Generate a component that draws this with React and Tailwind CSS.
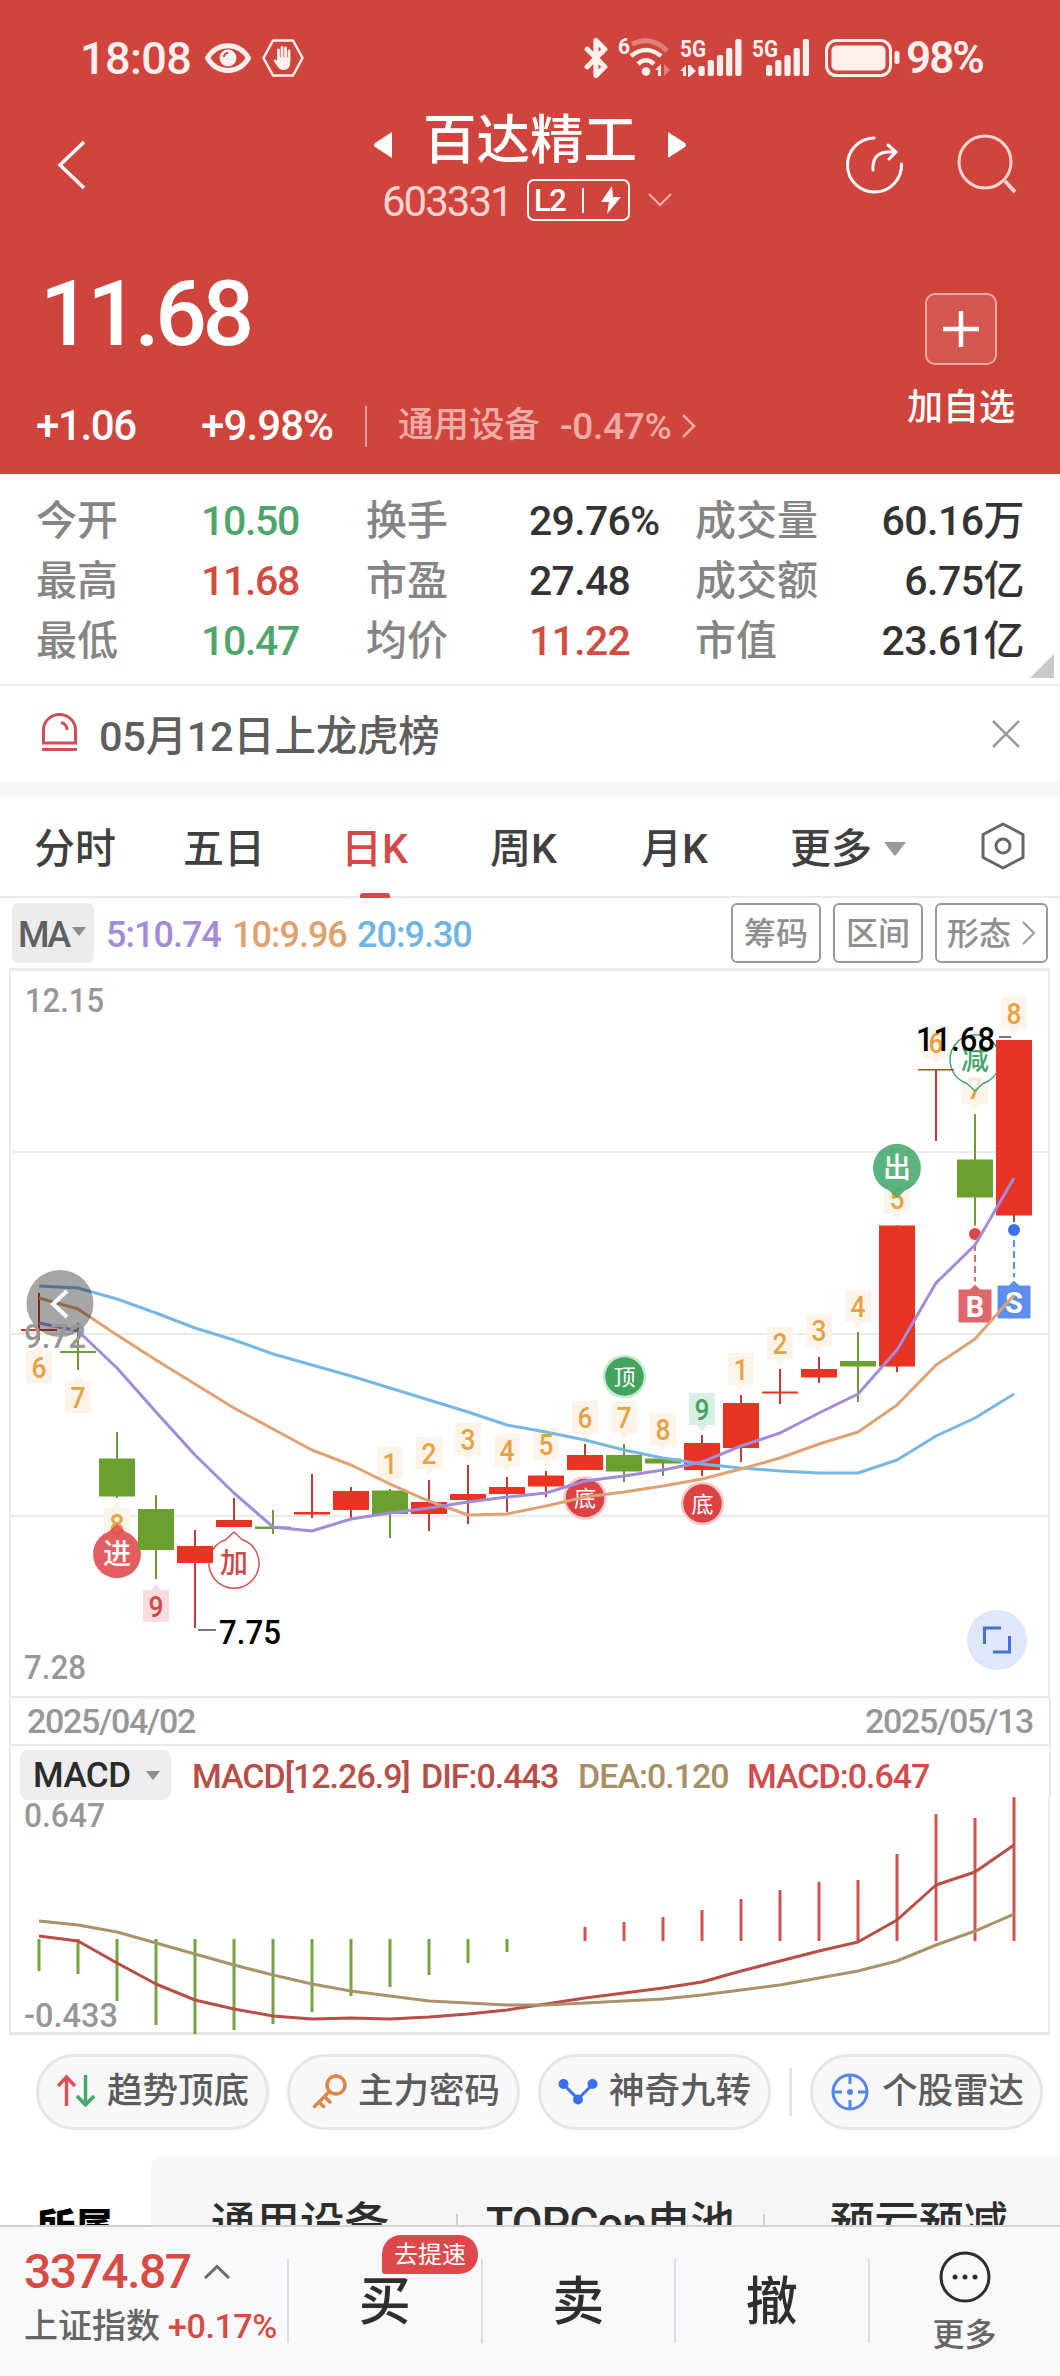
import { Bluetooth } from "lucide-react";

const FONT = "font-['Roboto','Noto_Sans_CJK_SC',sans-serif]";

const STATS = [
  ["今开", "10.50", "text-[#4fa56b]", "换手", "29.76%", "text-[#333]", "成交量", "60.16万"],
  ["最高", "11.68", "text-[#d14c44]", "市盈", "27.48", "text-[#333]", "成交额", "6.75亿"],
  ["最低", "10.47", "text-[#4fa56b]", "均价", "11.22", "text-[#d14c44]", "市值", "23.61亿"],
];

// [color, high, bodyTop, bodyBottom, low]
const CANDLES = [
  ["r", 1293, 1329, 1331, 1340],
  ["g", 1323, 1351, 1353, 1370],
  ["g", 1432, 1458.5, 1496.5, 1498],
  ["g", 1495, 1509, 1550, 1579],
  ["r", 1530, 1546, 1563, 1628],
  ["r", 1498, 1520, 1527, 1527],
  ["g", 1510, 1526.5, 1529, 1534],
  ["r", 1474, 1512, 1514.5, 1518],
  ["r", 1487, 1491, 1510, 1518],
  ["g", 1489, 1490.5, 1514, 1538],
  ["r", 1480, 1502, 1514, 1531],
  ["r", 1465, 1494, 1500, 1524],
  ["r", 1477, 1487, 1494, 1512],
  ["r", 1471, 1475.5, 1486.5, 1497],
  ["r", 1444, 1455, 1470, 1470],
  ["g", 1444, 1455, 1471.5, 1482],
  ["g", 1457, 1458.5, 1463.5, 1476],
  ["r", 1435, 1443, 1470, 1476],
  ["r", 1395, 1403, 1448, 1462],
  ["r", 1369, 1391.5, 1393.5, 1404],
  ["r", 1357, 1369, 1377.5, 1383],
  ["g", 1332, 1361, 1366.5, 1402],
  ["r", 1225.5, 1225.5, 1366.5, 1372],
  ["r", 1069, 1069, 1070.5, 1141],
  ["g", 1114, 1159.5, 1197.5, 1225.5],
  ["r", 1040, 1040, 1215.5, 1222],
];

const MA20 = [1286, 1288, 1299, 1313, 1328, 1340, 1354, 1365, 1376, 1388, 1400, 1412, 1425, 1432, 1440, 1450, 1458, 1464, 1468, 1471, 1473, 1473, 1460, 1436, 1418, 1394];
const MA10 = [1298, 1309, 1335, 1360, 1384, 1408, 1429, 1450, 1465, 1484, 1501, 1515, 1514, 1506, 1497, 1492, 1486, 1479, 1469, 1458, 1444, 1432, 1405, 1365, 1339, 1295];
const MA5 = [1323, 1331, 1368, 1412, 1455, 1493, 1527, 1531, 1519, 1513, 1508, 1502, 1497, 1493, 1481, 1476, 1470, 1462, 1446, 1433, 1413, 1394, 1350, 1283, 1245, 1178];
const DIF = [1936, 1941, 1963, 1984, 2000, 2009, 2016, 2019, 2018, 2019, 2017, 2014, 2010, 2004, 1998, 1993, 1988, 1982, 1971, 1961, 1951, 1942, 1920, 1885, 1872, 1845];
const DEA = [1921, 1925, 1932, 1943, 1954, 1965, 1975, 1984, 1991, 1996, 2001, 2003, 2005, 2005, 2003, 2001, 1999, 1995, 1990, 1985, 1978, 1971, 1961, 1945, 1931, 1914];
const BARS = [1971, 1974, 2001, 2025, 2034, 2030, 2024, 2012, 1996, 1987, 1975, 1963, 1952, null, 1927, 1922, 1917, 1910, 1899, 1890, 1882, 1880, 1854, 1814, 1818, 1797];

// [candle index, digit, box top, pointer direction, tone]
const COUNTS = [
  [0, 6, 1351, "up", "o"],
  [1, 7, 1381, "up", "o"],
  [2, 8, 1508, "up", "o"],
  [3, 9, 1590, "up", "r"],
  [9, 1, 1447, "down", "o"],
  [10, 2, 1437, "down", "o"],
  [11, 3, 1423, "down", "o"],
  [12, 4, 1434, "down", "o"],
  [13, 5, 1428, "down", "o"],
  [14, 6, 1401, "down", "o"],
  [15, 7, 1401, "down", "o"],
  [16, 8, 1413, "down", "o"],
  [17, 9, 1393, "down", "g"],
  [18, 1, 1353, "down", "o"],
  [19, 2, 1327, "down", "o"],
  [20, 3, 1314, "down", "o"],
  [21, 4, 1290, "down", "o"],
  [22, 5, 1182, "down", "o"],
  [23, 6, 1026, "down", "o"],
  [24, 7, 1072, "down", "o"],
  [25, 8, 997, "down", "o"],
];

const TONES = {
  o: ["#fdf4e9", "#e6a244"],
  r: ["#f9dcde", "#d0494b"],
  g: ["#d9efe1", "#45a364"],
};

const xAt = (i) => 39 + i * 39;
const toPoints = (ys) => ys.map((y, i) => `${xAt(i)},${y}`).join(" ");

function Line({ ys, color, width = 3 }) {
  return <polyline points={toPoints(ys)} fill="none" stroke={color} strokeWidth={width} strokeLinejoin="round" />;
}

function Count({ item }) {
  const [i, digit, top, dir, tone] = item;
  const [bg, fg] = TONES[tone];
  const x = xAt(i);
  const tip = dir === "up" ? `${x - 5},${top} ${x},${top - 6} ${x + 5},${top}` : `${x - 5},${top + 32} ${x},${top + 38} ${x + 5},${top + 32}`;
  return (
    <g>
      <rect x={x - 13} y={top} width="26" height="32" rx="1" fill={bg} />
      <polygon points={tip} fill={bg} />
      <text x={x} y={top + 27} fontSize="30" textAnchor="middle" fill={fg} textLength="15" lengthAdjust="spacingAndGlyphs">
        {digit}
      </text>
    </g>
  );
}

function Candle({ data, i }) {
  const [c, high, top, bottom, low] = data;
  const x = xAt(i);
  return (
    <g>
      <line x1={x} x2={x} y1={high} y2={low} stroke={c === "r" ? "#c03c34" : "#6b9b37"} strokeWidth="2" />
      <rect x={x - 18} y={top} width="36" height={bottom - top} fill={c === "r" ? "#e93323" : "#6b9f2f"} />
    </g>
  );
}

function Pin({ x, y, r, dir, label, fill, stroke, color }) {
  const s = dir === "up" ? -1 : 1;
  return (
    <g>
      <path
        d={`M${x - 8} ${y + s * (r - 1.5)} L${x} ${y + s * (r + 6)} L${x + 8} ${y + s * (r - 1.5)} A${r} ${r} 0 1 ${dir === "up" ? 1 : 0} ${x - 8} ${y + s * (r - 1.5)} Z`}
        fill={fill}
        stroke={stroke}
        strokeWidth="1.5"
        strokeLinejoin="round"
      />
      <text x={x} y={y + 10} fontSize="28" textAnchor="middle" fill={color}>
        {label}
      </text>
    </g>
  );
}

function Dot({ x, y, label, fill, ring }) {
  return (
    <g>
      <circle cx={x} cy={y} r="20.5" fill={fill} stroke={ring} strokeWidth="2.5" />
      <text x={x} y={y + 8} fontSize="22" fontWeight="400" textAnchor="middle" fill="#fff">
        {label}
      </text>
    </g>
  );
}

function Trade({ x, dotY, boxY, label, fill, dot }) {
  return (
    <g>
      <circle cx={x} cy={dotY} r="6" fill={dot} />
      <line x1={x} x2={x} y1={dotY + 10} y2={boxY - 8} stroke={fill} strokeWidth="2" strokeDasharray="7 4" />
      <polygon points={`${x - 6},${boxY + 1} ${x},${boxY - 5} ${x + 6},${boxY + 1}`} fill={fill} />
      <rect x={x - 16.5} y={boxY} width="33" height="33" rx="1" fill={fill} />
      <text x={x} y={boxY + 27} fontSize="29" fontWeight="700" textAnchor="middle" fill="#fff">
        {label}
      </text>
    </g>
  );
}

function KLineChart() {
  return (
    <svg viewBox="0 968 1060 730" className="block h-[730px] w-full">
      <rect x="9" y="968" width="1041" height="3" fill="#ebebeb" />
      <g stroke="#ebebeb" strokeWidth="2">
        <line x1="10" x2="10" y1="968" y2="1698" />
        <line x1="1049" x2="1049" y1="968" y2="1698" />
        <line x1="10" x2="1049" y1="1152" y2="1152" />
        <line x1="10" x2="1049" y1="1334" y2="1334" />
        <line x1="10" x2="1049" y1="1516" y2="1516" />
        <line x1="10" x2="1049" y1="1697" y2="1697" />
      </g>

      {COUNTS.map((item) => (
        <Count key={item[0]} item={item} />
      ))}

      <Pin x={117} y={1554} r={24} dir="up" label="进" fill="#e0484be0" stroke="none" color="#fff" />
      <Pin x={234} y={1563} r={25} dir="up" label="加" fill="#fff" stroke="#cf5658" color="#cf4a4c" />
      <Pin x={897} y={1168} r={24} dir="down" label="出" fill="#4aab70e6" stroke="none" color="#fff" />
      <Pin x={975} y={1060} r={25} dir="down" label="减" fill="#ffffffc0" stroke="#45a36a" color="#45a36a" />
      <Dot x={624.5} y={1376.5} label="顶" fill="#43a35f" ring="#c6e9d2" />
      <Dot x={585} y={1498} label="底" fill="#dd4245" ring="#f7c9cd" />
      <Dot x={702.5} y={1503.5} label="底" fill="#dd4245" ring="#f7c9cd" />
      <Trade x={975} dotY={1234} boxY={1289.5} label="B" fill="#df676c" dot="#de454a" />
      <Trade x={1014} dotY={1230} boxY={1285.5} label="S" fill="#5f8fee" dot="#3b73e8" />

      {CANDLES.map((c, i) => (
        <Candle key={i} data={c} i={i} />
      ))}

      <Line ys={MA20} color="#77b7e4" />
      <Line ys={MA10} color="#e0a273" />
      <Line ys={MA5} color="#a28cda" />

      <circle cx="60" cy="1303.5" r="33.5" fill="#000" fillOpacity="0.35" />
      <polyline points="67,1291 53,1304 67,1317" fill="none" stroke="#fff" strokeWidth="4" />

      <g fontSize="34" fill="#979797">
        <text x="25" y="1012" textLength="79" lengthAdjust="spacingAndGlyphs">12.15</text>
        <text x="24" y="1348" textLength="62" lengthAdjust="spacingAndGlyphs">9.72</text>
        <text x="24" y="1679" textLength="62" lengthAdjust="spacingAndGlyphs">7.28</text>
        <text x="219" y="1644" textLength="62" lengthAdjust="spacingAndGlyphs" fill="#000">7.75</text>
        <text x="916" y="1051" textLength="79" lengthAdjust="spacingAndGlyphs" fill="#000">11.68</text>
      </g>
      <g stroke="#777" strokeWidth="2">
        <line x1="198" x2="216" y1="1630" y2="1630" />
        <line x1="999" x2="1011" y1="1037" y2="1037" />
      </g>

      <circle cx="997" cy="1640" r="30" fill="#dfe8fb" />
      <path d="M984.500 1644V1628H1001M1009.500 1636V1652H993" fill="none" stroke="#4470dd" strokeWidth="3" />
    </svg>
  );
}

function MacdChart() {
  return (
    <svg viewBox="0 1797 1060 239" className="block h-[239px] w-full">
      <g stroke="#ebebeb" strokeWidth="2">
        <line x1="10" x2="10" y1="1797" y2="2035" />
        <line x1="1049" x2="1049" y1="1797" y2="2035" />
      </g>
      <rect x="9" y="2032" width="1041" height="3" fill="#e6e6e6" />
      {BARS.map((y, i) =>
        y === null ? null : (
          <line key={i} x1={xAt(i)} x2={xAt(i)} y1={y > 1940 ? 1939 : 1941} y2={y} stroke={y > 1940 ? "#74a33f" : "#cf5450"} strokeWidth="3" />
        )
      )}
      <Line ys={DIF} color="#b94d47" />
      <Line ys={DEA} color="#a9936a" />
      <g fontSize="33" fill="#979797">
        <text x="24" y="1827" textLength="81" lengthAdjust="spacingAndGlyphs">0.647</text>
        <text x="24" y="2027" textLength="94" lengthAdjust="spacingAndGlyphs">-0.433</text>
      </g>
    </svg>
  );
}

function Signal({ heights }) {
  return (
    <>
      {heights.map((h, i) => (
        <rect key={i} x={i * 9.2} y={37 - h} width="6.2" height={h} rx="2" />
      ))}
    </>
  );
}

function StatusBar() {
  return (
    <div className="flex h-[116px] items-center pl-[80px] text-[#fff0ee]">
      <span className="w-[125px] text-[45px] leading-none tracking-[-0.6px]">18:08</span>
      <svg viewBox="0 0 46 30" className="h-[30px] w-[46px]">
        <path d="M2.500 15C12-1.500 34-1.500 43.500 15C34 31.500 12 31.500 2.500 15Z" fill="none" stroke="currentColor" strokeWidth="5" />
        <circle cx="23" cy="15" r="8.500" fill="currentColor" />
        <path d="M19 14a4 4 0 0 1 4-4" fill="none" stroke="#cf443c" strokeWidth="2" />
      </svg>
      <svg viewBox="0 0 42 38" className="ml-[11px] h-[38px] w-[42px]" fill="none" stroke="currentColor" strokeLinecap="round">
        <path d="M11 1.500H31L40.500 19L31 36.500H11L1.500 19Z" strokeWidth="2.500" strokeLinejoin="round" />
        <path d="M16.500 20V11M20 19V8.500M23.500 19V9M27 20V12" strokeWidth="2.800" />
        <path d="M15 18.500H28.300V23Q28 31 21.500 31Q17 31 14.500 26L11.500 21.500Q13 19.500 15 22Z" fill="currentColor" stroke="none" />
      </svg>
      <Bluetooth className="ml-[271px] h-[42px] w-[42px]" strokeWidth={3} />
      <svg viewBox="0 0 52 40" className="ml-[1px] h-[40px] w-[52px] overflow-visible">
        <text x="0" y="16" fontSize="22" fontWeight="700" fill="currentColor" textLength="12" lengthAdjust="spacingAndGlyphs">6</text>
        <g fill="none" stroke="currentColor" strokeWidth="4.500">
          <path d="M14 6Q34-3 49 13" opacity="0.35" strokeWidth="5" />
          <path d="M13 18Q28 6 43 18" />
          <path d="M20 26Q28 18.500 36 26" />
        </g>
        <circle cx="28" cy="33.500" r="4.300" fill="currentColor" />
        <path d="M37 32L43 26V38H40V32Z" fill="currentColor" />
        <path d="M46 26V38L52 32Z" fill="currentColor" opacity="0.35" />
      </svg>
      <svg viewBox="0 0 64 38" className="ml-[10px] h-[38px] w-[64px] overflow-visible" fill="currentColor">
        <text x="0" y="18" fontSize="24" fontWeight="700" textLength="26" lengthAdjust="spacingAndGlyphs">5G</text>
        <path d="M0 32L6 26V37H3V32ZM8 26H11V27L16 32L9 38H8Z" />
        <g transform="translate(18.500 0)"><Signal heights={[10, 16, 21, 28, 37]} /></g>
      </svg>
      <svg viewBox="0 0 60 38" className="ml-[8px] h-[38px] w-[60px] overflow-visible" fill="currentColor">
        <text x="0" y="18" fontSize="24" fontWeight="700" textLength="26" lengthAdjust="spacingAndGlyphs">5G</text>
        <g transform="translate(14 0)"><Signal heights={[11, 16, 21, 28, 37]} /></g>
      </svg>
      <svg viewBox="0 0 78 38" className="ml-[12px] h-[38px] w-[78px]">
        <rect x="2.500" y="1.500" width="64" height="35" rx="10" fill="none" stroke="currentColor" strokeWidth="3" />
        <rect x="7.500" y="6.500" width="54" height="25" rx="5" fill="currentColor" />
        <rect x="70.500" y="12" width="5" height="13" rx="2" fill="currentColor" />
      </svg>
      <span className="ml-[4px] text-[44px] leading-none font-semibold tracking-[-2px]">98%</span>
    </div>
  );
}

function Header() {
  return (
    <header className="h-[474px] bg-[#cf443c] text-white">
      <StatusBar />
      <div className="flex h-[114px] items-start">
        <svg viewBox="0 0 30 50" className="mt-[24px] ml-[56px] h-[50px] w-[30px]">
          <path d="M28 2L4 25L28 48" fill="none" stroke="currentColor" strokeWidth="3.500" />
        </svg>
        <div className="ml-[228px] flex w-[432px] flex-col items-center">
          <div className="-mt-[4px] flex h-[58px] items-center self-center">
            <svg viewBox="0 0 18 26" className="mt-[8px] h-[26px] w-[18px]"><path d="M18 0V26L1 15Q-1 13 1 11Z" fill="currentColor" /></svg>
            <span className="mx-[31px] text-[53.5px] leading-none">百达精工</span>
            <svg viewBox="0 0 18 26" className="mt-[8px] h-[26px] w-[18px]"><path d="M0 0V26L17 15Q19 13 17 11Z" fill="currentColor" /></svg>
          </div>
          <div className="mt-[8px] flex h-[44px] items-center self-start pl-[67px]">
            <span className="mt-[4px] ml-[1px] w-[145px] text-[42px] leading-none font-normal tracking-[-2px] text-[#ffd3cf]">603331</span>
            <div className="flex h-[42px] w-[103px] items-center rounded-[7px] border-2 border-white pl-[5px]">
              <span className="w-[48px] text-[31px] leading-none tracking-[-1.5px]">L2</span>
              <span className="h-[25px] w-[2px] bg-white" />
              <svg viewBox="0 0 20 28" className="ml-[17px] h-[28px] w-[20px]"><path d="M11 0L0 16H8L6 28L20 11H12Z" fill="currentColor" /></svg>
            </div>
            <svg viewBox="0 0 24 14" className="ml-[18px] h-[14px] w-[24px]"><path d="M1 1L12 12L23 1" fill="none" stroke="#f0b4af" strokeWidth="2" /></svg>
          </div>
        </div>
        <svg viewBox="0 0 60 60" className="mt-[19px] ml-[99px] h-[60px] w-[60px]" fill="none" stroke="currentColor" strokeWidth="3" strokeLinecap="round">
          <path d="M29 3A27 27 0 1 0 56.500 29" />
          <path d="M28 35V31Q29 18 42 17H51M43 10L51 17L44 24" />
        </svg>
        <svg viewBox="0 0 62 62" className="mt-[18px] ml-[52px] h-[62px] w-[62px]" fill="none" stroke="#ffd3cf" strokeWidth="3">
          <circle cx="28" cy="28" r="26" />
          <path d="M48 47L58 58" strokeWidth="4" />
        </svg>
      </div>
      <div className="flex justify-between">
        <div>
          <div className="mt-[37px] ml-[40px] text-[91px] leading-[94px] tracking-[-4.500px]">11.68</div>
          <div className="mt-[42px] ml-[36px] flex h-[46px] items-center leading-none">
            <span className="w-[165px] text-[42px] tracking-[-1.4px]">+1.06</span>
            <span className="w-[164px] text-[42px] tracking-[-0.9px]">+9.98%</span>
            <span className="h-[41px] w-[2px] bg-[#e59a95]" />
            <span className="ml-[31px] text-[35.5px] text-[#efaca7]">通用设备</span>
            <span className="ml-[20px] w-[122px] text-[37px] tracking-[-0.3px] text-[#efaca7]">-0.47%</span>
            <svg viewBox="0 0 14 24" className="h-[24px] w-[14px]"><path d="M1 1L12 12L1 23" fill="none" stroke="#efaca7" strokeWidth="2.500" /></svg>
          </div>
        </div>
        <div className="mt-[63px] mr-[45px] flex flex-col items-center">
          <div className="flex size-[72px] items-center justify-center rounded-[10px] border-2 border-[#eda9a4] bg-white/10">
            <svg viewBox="0 0 36 36" className="size-[36px]"><path d="M18 0V36M0 18H36" stroke="currentColor" strokeWidth="4.500" /></svg>
          </div>
          <span className="mt-[25px] text-[36px] leading-[36px]">加自选</span>
        </div>
      </div>
    </header>
  );
}

function Stats() {
  return (
    <section className="relative h-[212px] border-b-2 border-[#ebebeb] pt-[17px]">
      {STATS.map(([a, av, ac, b, bv, bc, c, cv]) => (
        <div key={a} className="flex h-[60px] items-center pr-[36px] pl-[36px] text-[41px] leading-none text-[#858585]">
          <span className="w-[165px]">{a}</span>
          <span className={`w-[165px] tracking-[-1.3px] ${ac}`}>{av}</span>
          <span className="w-[163px]">{b}</span>
          <span className={`w-[166px] tracking-[-0.7px] ${bc}`}>{bv}</span>
          <span>{c}</span>
          <span className="ml-auto tracking-[-0.5px] text-[#333]">{cv}</span>
        </div>
      ))}
      <svg viewBox="0 0 24 24" className="absolute right-[6px] bottom-[6px] size-[24px]"><path d="M24 0V24H0Z" fill="#c9c9c9" /></svg>
    </section>
  );
}

function Notice() {
  return (
    <section className="flex h-[96px] items-center pr-[40px] pl-[41px]">
      <svg viewBox="0 0 37 38" className="-mt-[4px] h-[38px] w-[37px]" fill="none" stroke="#cc5154" strokeWidth="3">
        <path d="M2.500 30V17A16 15.500 0 0 1 34.500 17V30Z" />
        <path d="M1 36.500H36" />
        <path d="M20 9.500Q26 11 26 17" />
      </svg>
      <span className="mt-[5px] ml-[21px] text-[41.5px] leading-none tracking-[-0.3px] text-[#5e5e5e]">05月12日上龙虎榜</span>
      <svg viewBox="0 0 28 28" className="ml-auto size-[28px]"><path d="M1 1L27 27M27 1L1 27" stroke="#999" strokeWidth="2.500" /></svg>
    </section>
  );
}

function Tabs() {
  return (
    <nav className="flex h-[101px] items-center border-b-2 border-[#ebebeb] pt-[5px] pl-[34px] text-[41px] leading-none text-[#404040]">
      <span className="w-[149px]">分时</span>
      <span className="w-[158px]">五日</span>
      <span className="relative w-[149px] text-[#d44a4a]">
        日K
        <span className="absolute top-[64px] left-[19px] h-[5px] w-[30px] rounded-t-[3px] bg-[#d44a4a]" />
      </span>
      <span className="w-[151px]">周K</span>
      <span className="w-[149px]">月K</span>
      <span>更多</span>
      <svg viewBox="0 0 22 14" className="ml-[12px] h-[14px] w-[22px]"><path d="M0 0H22L12 13Q11 14 10 13Z" fill="#999" /></svg>
      <svg viewBox="0 0 44 48" className="-mt-[6px] ml-[75px] h-[48px] w-[44px]" fill="none" stroke="#666" strokeWidth="3">
        <path d="M22 2L42 12.500V35.500L22 46L2 35.500V12.500Z" strokeLinejoin="round" />
        <circle cx="22" cy="24" r="7" />
      </svg>
    </nav>
  );
}

function MaRow() {
  const btn = "flex h-[60px] items-center justify-center rounded-[6px] border-2 border-[#999] pt-[2px]";
  return (
    <div className="flex h-[69px] items-start pt-[5px] pr-[12px] pl-[12px] text-[36px] leading-none">
      <div className="flex h-[60px] w-[82px] items-center rounded-[6px] bg-[#ececec] pt-[3px] pl-[6px] text-[#606060]">
        <span className="w-[54px] tracking-[-2.5px]">MA</span>
        <svg viewBox="0 0 14 9" className="-mt-[6px] h-[9px] w-[14px]"><path d="M0 0H14L7 9Z" fill="#8d8d8d" /></svg>
      </div>
      <div className="mt-[14px] ml-[12px] flex">
        <span className="w-[126px] tracking-[-1px] text-[#a28cda]">5:10.74</span>
        <span className="w-[125px] tracking-[-1px] text-[#e0a070]">10:9.96</span>
        <span className="tracking-[-1px] text-[#70b4e4]">20:9.30</span>
      </div>
      <div className="ml-auto flex gap-[12px] text-[32px] text-[#8f8f8f]">
        <div className={`${btn} w-[90px]`}>筹码</div>
        <div className={`${btn} w-[90px]`}>区间</div>
        <div className={`${btn} w-[113px] gap-[11px]`}>
          形态
          <svg viewBox="0 0 14 24" className="-mt-[3px] h-[24px] w-[14px]"><path d="M1 1L12 12L1 23" fill="none" stroke="#999" strokeWidth="2" /></svg>
        </div>
      </div>
    </div>
  );
}

function Pills() {
  const pill = "flex h-[76px] w-[233px] items-center rounded-full border-[3px] border-[#e6e6e6] bg-[#f8f8f8] whitespace-nowrap";
  return (
    <div className="flex h-[120px] items-center pb-[9px] pl-[36px] text-[35.5px] leading-none text-[#5c5c5c]">
      <div className={`${pill} pl-[18px]`}>
        <svg viewBox="0 0 38 32" className="-mt-[2px] h-[32px] w-[38px]" fill="none" strokeWidth="3.500">
          <path d="M9.500 31V3M1 11L9.500 2L18 11" stroke="#d9535a" />
          <path d="M28.500 0V28M20 21L28.500 30L37 21" stroke="#48a86a" />
        </svg>
        <span className="ml-[12px]">趋势顶底</span>
      </div>
      <div className={`${pill} ml-[18px] pl-[22px]`}>
        <svg viewBox="0 0 36 36" className="-mt-[2px] h-[36px] w-[36px]" fill="none" stroke="#e08445" strokeWidth="3.500">
          <circle cx="24" cy="12" r="9" />
          <path d="M17.500 18.500L2.500 33.500M7 29L11.500 33.500M12.500 23.500L18 29" strokeLinecap="round" />
        </svg>
        <span className="ml-[10px]">主力密码</span>
      </div>
      <div className={`${pill} ml-[18px] pl-[17px]`}>
        <svg viewBox="0 0 40 26" className="h-[26px] w-[40px]" fill="#3a70ea" stroke="#3a70ea" strokeWidth="3">
          <path d="M6 6L20 20L34 6" fill="none" />
          <circle cx="5.500" cy="5" r="3.500" />
          <circle cx="34.500" cy="5" r="3.500" />
          <circle cx="20" cy="20.500" r="3.500" />
        </svg>
        <span className="ml-[11px]">神奇九转</span>
      </div>
      <span className="ml-[18px] h-[48px] w-[3px] bg-[#e6e6e6]" />
      <div className={`${pill} ml-[18px] pl-[18px]`}>
        <svg viewBox="0 0 38 38" className="h-[38px] w-[38px]" fill="none" stroke="#5584ec" strokeWidth="3">
          <circle cx="19" cy="19" r="17" />
          <path d="M19 2V11M19 27V36M2 19H11M27 19H36" />
          <circle cx="19" cy="19" r="3" fill="#5584ec" stroke="none" />
        </svg>
        <span className="ml-[13px]">个股雷达</span>
      </div>
    </div>
  );
}

function Sectors() {
  return (
    <div className="flex h-[69px] overflow-hidden">
      <span className="w-[151px] pt-[52px] pl-[37px] text-[38px] leading-none font-black text-black">所属</span>
      <div className="flex flex-1 items-start rounded-tl-[12px] bg-[#f7f7f7] pt-[46px] pl-[-4px] text-[44.5px] leading-none whitespace-nowrap text-[#2e2e2e]">
        <span className="w-[305px] pl-[60px]">通用设备</span>
        <span className="mt-[12px] h-[40px] w-[2px] bg-[#d0d0d0]" />
        <span className="w-[305px] pl-[28px] tracking-[-0.7px]">TOPCon电池</span>
        <span className="mt-[12px] h-[40px] w-[2px] bg-[#d0d0d0]" />
        <span className="pl-[65px]">预亏预减</span>
      </div>
    </div>
  );
}

function BottomBar() {
  const cell = "flex h-[84px] w-[193.500px] items-center justify-center border-l-2 border-[#dcdce0] text-[52px] leading-none text-[#2e2e2e]";
  return (
    <footer className="flex h-[151px] border-t-2 border-[#d2d2d4] bg-[#f9f9fb]">
      <div className="w-[287px] pt-[23px] pl-[24px] leading-none">
        <div className="flex h-[44px] items-center text-[48px] tracking-[-1.500px] text-[#d64b44]">
          <span className="w-[180px]">3374.87</span>
          <svg viewBox="0 0 26 14" className="h-[14px] w-[26px]"><path d="M1 13L13 1.500L25 13" fill="none" stroke="#6b6b6b" strokeWidth="3" /></svg>
        </div>
        <div className="mt-[12px] flex h-[40px] items-center whitespace-nowrap">
          <span className="w-[144px] text-[34px] text-[#666]">上证指数</span>
          <span className="text-[34px] tracking-[-0.4px] text-[#d64b44]">+0.17%</span>
        </div>
      </div>
      <div className="mt-[32px] flex">
        <div className={`${cell} relative`}>
          <span className="mt-[4px]">买</span>
          <span className="absolute -top-[24px] left-[93px] flex h-[39px] w-[96px] items-center justify-center rounded-[19px] rounded-bl-[3px] bg-[#df484b] text-[24px] font-normal text-white">去提速</span>
        </div>
        <div className={cell}><span className="mt-[4px]">卖</span></div>
        <div className={cell}><span className="mt-[4px]">撤</span></div>
        <div className="flex h-[84px] w-[192px] flex-col items-center border-l-2 border-[#dcdce0]">
          <svg viewBox="0 0 52 52" className="-mt-[8px] size-[52px] shrink-0">
            <circle cx="26" cy="26" r="24" fill="none" stroke="#2e2e2e" strokeWidth="3" />
            <circle cx="16" cy="26" r="2.500" fill="#2e2e2e" />
            <circle cx="26" cy="26" r="2.500" fill="#2e2e2e" />
            <circle cx="36" cy="26" r="2.500" fill="#2e2e2e" />
          </svg>
          <span className="mt-[16px] text-[32px] leading-[32px] text-[#666]">更多</span>
        </div>
      </div>
    </footer>
  );
}

export default function App() {
  return (
    <div className={`h-[2376px] w-[1060px] overflow-hidden bg-white font-medium ${FONT}`}>
      <Header />
      <Stats />
      <Notice />
      <div className="h-[15px] bg-[#f7f7f7]" />
      <Tabs />
      <MaRow />
      <div className="mt-px">
        <KLineChart />
      </div>
      <div className="mx-[9px] flex h-[48px] items-center justify-between border-x-2 border-b-2 border-[#ebebeb] pr-[16px] pl-[16px] text-[34px] leading-none tracking-[-1.3px] text-[#979797]">
        <span>2025/04/02</span>
        <span>2025/05/13</span>
      </div>
      <div className="mx-[9px] flex h-[51px] items-start border-x-2 border-[#ebebeb] pt-[4px] pl-[9px] text-[34px] leading-none">
        <div className="flex h-[50px] w-[151px] items-center rounded-[8px] bg-[#eee] pl-[13px] text-[#2b2b2b]">
          <span className="w-[113px] text-[35px] tracking-[-0.5px]">MACD</span>
          <svg viewBox="0 0 14 9" className="h-[9px] w-[14px]"><path d="M0 0H14L7 9Z" fill="#8d8d8d" /></svg>
        </div>
        <div className="mt-[9px] ml-[21px] flex tracking-[-1px] whitespace-nowrap">
          <span className="w-[229px] text-[#b94d47]">MACD[12.26.9]</span>
          <span className="w-[157px] text-[#b94d47]">DIF:0.443</span>
          <span className="w-[169px] text-[#a58f66]">DEA:0.120</span>
          <span className="text-[#d04c4c]">MACD:0.647</span>
        </div>
      </div>
      <MacdChart />
      <Pills />
      <Sectors />
      <BottomBar />
    </div>
  );
}
